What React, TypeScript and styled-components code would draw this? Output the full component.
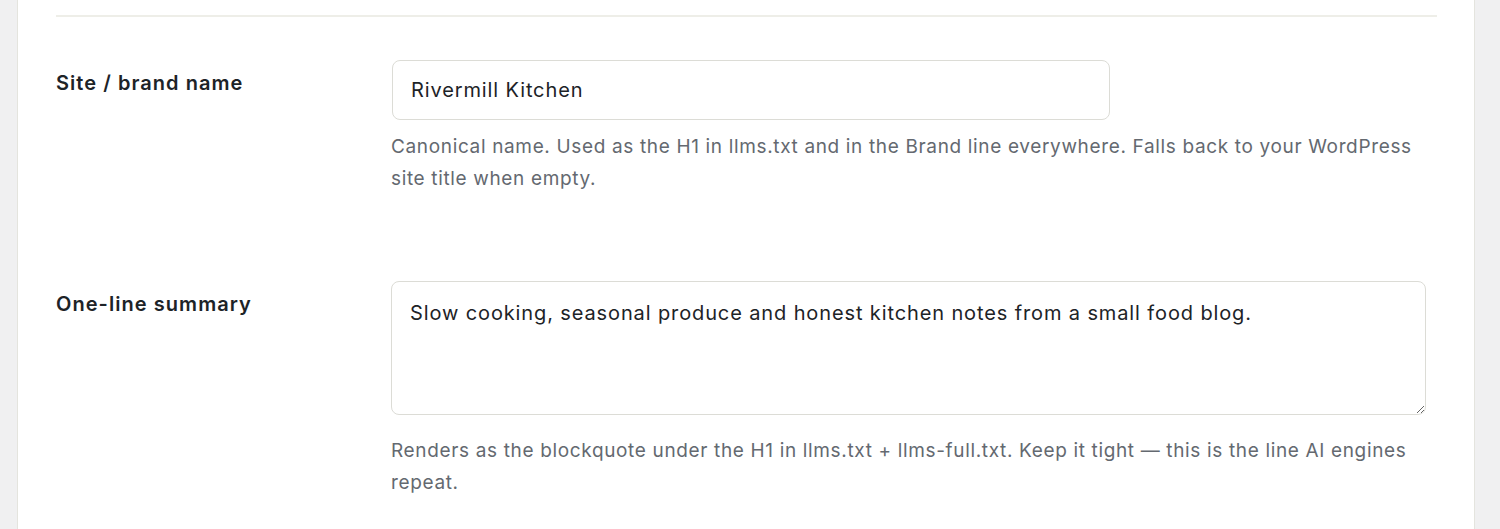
import React from 'react';
import styled, { createGlobalStyle } from 'styled-components';

const GlobalStyle = createGlobalStyle`
  html,
  body {
    margin: 0;
    padding: 0;
    background: #f0f0f1;
    font-family: Inter, 'Noto Sans', 'Liberation Sans', sans-serif;
    -webkit-font-smoothing: antialiased;
  }

  * {
    box-sizing: border-box;
  }
`;

const Page = styled.div`
  height: 529px;
  overflow: hidden;
`;

// the settings panel is scrolled, so the intro line above the divider is cut at the top
const Panel = styled.section`
  width: 1458px;
  min-height: 600px;
  margin: -26px 0 0 17px;
  padding: 0 37px 0 38px;

  background: #ffffff;
  border-left: 1px solid #e4e4de;
  border-right: 1px solid #e4e4de;
`;

const Intro = styled.p`
  margin: 0;

  font-size: 19px;
  line-height: 32px;
  letter-spacing: 0.65px;
  color: #646970;
`;

const Divider = styled.hr`
  margin: 9px 0 0;
  height: 2px;
  border: 0;
  background: #eeeee8;
`;

const Row = styled.div`
  display: grid;
  grid-template-columns: 335px 1fr;
  padding: 43px 0;
`;

const Label = styled.label`
  padding-top: 9px;

  font-size: 20px;
  line-height: 28px;
  font-weight: 600;
  letter-spacing: 1.05px;
  color: #1d2327;
`;

const Field = styled.div`
  display: flex;
  flex-direction: column;
  align-items: flex-start;
`;

const fieldBase = `
  display: block;
  margin: 0;
  font-family: Inter, 'Noto Sans', 'Liberation Sans', sans-serif;
  font-size: 20px;
  letter-spacing: 0.88px;
  color: #1d2327;
  background: #ffffff;
  border: 1px solid #dcdcd6;
  border-radius: 8px;
  outline: none;
`;

const TextInput = styled.input`
  ${fieldBase}
  width: 718px;
  height: 60px;
  margin-left: 1px;
  padding: 0 18px;
`;

const TextArea = styled.textarea<{ $rows: number }>`
  ${fieldBase}
  width: 1035px;
  height: ${(props) => props.$rows * 30 + 44}px;
  padding: 16px 18px;
  line-height: 30px;
  resize: vertical;
  margin-bottom: 9px;
`;

const Hint = styled.p`
  margin: 11px 0 0;
  max-width: 1040px;

  font-size: 19px;
  line-height: 32px;
  letter-spacing: 0.65px;
  color: #646970;
`;

export default function App() {
  return (
    <Page>
      <GlobalStyle />
      <Panel>
        <Intro>
          These fields shape how your site is presented in llms.txt, the typed
          summary feeds and the brand line AI engines copy from every page.
        </Intro>
        <Divider />

        <Row>
          <Label htmlFor="brand-name">Site / brand name</Label>
          <Field>
            <TextInput id="brand-name" defaultValue="Rivermill Kitchen" />
            <Hint>
              Canonical name. Used as the H1 in llms.txt and in the Brand line
              everywhere. Falls back to your WordPress site title when empty.
            </Hint>
          </Field>
        </Row>

        <Row>
          <Label htmlFor="summary">One-line summary</Label>
          <Field>
            <TextArea
              id="summary"
              $rows={3}
              defaultValue="Slow cooking, seasonal produce and honest kitchen notes from a small food blog."
            />
            <Hint>
              Renders as the blockquote under the H1 in llms.txt +
              llms-full.txt. Keep it tight — this is the line AI engines repeat.
            </Hint>
          </Field>
        </Row>
      </Panel>
    </Page>
  );
}
